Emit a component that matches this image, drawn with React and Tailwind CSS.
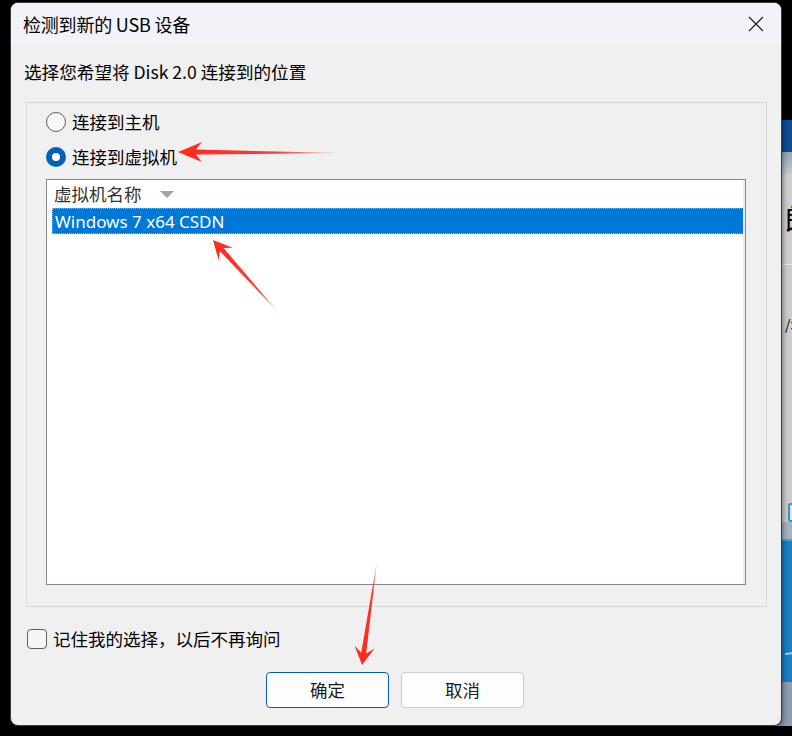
import React from "react";

const CJK = { fontFamily: '"Noto Sans CJK SC", "Noto Sans", sans-serif' };

function arrowPoints(tx, ty, px, py, lh, hw, sw) {
  const dx = px - tx;
  const dy = py - ty;
  const len = Math.hypot(dx, dy);
  const ux = dx / len;
  const uy = dy / len;
  const nx = -uy;
  const ny = ux;
  const ln = lh - 6;
  const bw = [px - ux * lh, py - uy * lh];
  const bn = [px - ux * ln, py - uy * ln];
  const pts = [
    [tx, ty],
    [bn[0] + nx * sw, bn[1] + ny * sw],
    [bw[0] + nx * hw, bw[1] + ny * hw],
    [px, py],
    [bw[0] - nx * hw, bw[1] - ny * hw],
    [bn[0] - nx * sw, bn[1] - ny * sw],
  ];
  return pts.map((p) => p[0].toFixed(1) + "," + p[1].toFixed(1)).join(" ");
}

function Arrows() {
  return (
    <svg className="absolute left-0 top-0 pointer-events-none" width="792" height="736" viewBox="0 0 792 736">
      <defs>
        <linearGradient id="g1" gradientUnits="userSpaceOnUse" x1="345" y1="153" x2="178" y2="152">
          <stop offset="0" stopColor="#ff2a1f" stopOpacity="0.1" />
          <stop offset="0.4" stopColor="#ff2a1f" stopOpacity="0.9" />
          <stop offset="1" stopColor="#ff2a1f" />
        </linearGradient>
        <linearGradient id="g2" gradientUnits="userSpaceOnUse" x1="279" y1="313" x2="213" y2="240">
          <stop offset="0" stopColor="#ff2a1f" stopOpacity="0.2" />
          <stop offset="0.3" stopColor="#ff2a1f" stopOpacity="0.9" />
          <stop offset="1" stopColor="#ff2a1f" />
        </linearGradient>
        <linearGradient id="g3" gradientUnits="userSpaceOnUse" x1="377" y1="561" x2="362" y2="665">
          <stop offset="0" stopColor="#ff2a1f" stopOpacity="0.3" />
          <stop offset="0.3" stopColor="#ff2a1f" stopOpacity="0.95" />
          <stop offset="1" stopColor="#ff2a1f" />
        </linearGradient>
      </defs>
      <polygon points={arrowPoints(345, 153, 178, 152, 24, 10, 2.5)} fill="url(#g1)" />
      <polygon points={arrowPoints(279, 313, 213, 240, 19, 9.5, 2.5)} fill="url(#g2)" />
      <polygon points={arrowPoints(377, 561, 362, 665, 18, 10, 2.5)} fill="url(#g3)" />
    </svg>
  );
}

function BackgroundWindow() {
  return (
    <div className="absolute left-[770px] top-[120px] w-[60px] h-[606px] flex flex-col bg-[#cbcbcb] border-l-[3px] border-[#7d7d7d]">
      <div className="h-[32px] bg-[#0c4d92]" />
      <div className="h-[22px] bg-gradient-to-b from-[#95a3b6] to-[#c4c9d0]" />
      <div className="h-[90px] bg-[#cfcfcf] relative overflow-hidden">
        <span className="absolute left-[12px] top-[30px] text-[28px] leading-none text-black" style={CJK}>朗</span>
      </div>
      <div className="h-[1px] bg-[#e6e6e6]" />
      <div className="h-[238px] bg-[#cdcdcd] relative">
        <span className="absolute left-[12px] top-[52px] text-[14px] leading-none text-black" style={CJK}>/址</span>
      </div>
      <div className="h-[19px] bg-[#cdcdcd] flex">
        <div className="ml-[15px] w-[30px] h-[19px] rounded-[3px] border-2 border-[#2a9bc0] bg-[#dfe9ee]" />
      </div>
      <div className="h-[17px] bg-[#a7b3c1]" />
      <div className="h-[2px] bg-[#3aa6e0]" />
      <div className="h-[141px] bg-[#1a7fc4] relative">
        <div className="absolute left-[12px] top-[110px] w-[40px] h-[2px] bg-[#9cd0f0] -rotate-6" />
      </div>
      <div className="flex-1 bg-[#8f9db0]" />
    </div>
  );
}

export default function App() {
  return (
    <div className="relative w-[792px] h-[736px] bg-black overflow-hidden" style={CJK}>
      <BackgroundWindow />
      <div className="absolute left-[10px] top-[2px] w-[772px] h-[724px] rounded-[8px] border border-[#3d3d3d] bg-[#f0f0f0] overflow-hidden flex flex-col shadow-[0_2px_6px_rgba(0,0,0,0.6)]">
        {/* title bar */}
        <div className="h-[41px] shrink-0 bg-[#f1f3f9] flex items-center pl-[12px] pr-[17px]">
          <span className="text-[18px] leading-none text-black tracking-[-0.2px]">检测到新的 USB 设备</span>
          <div className="flex-1" />
          <svg width="16" height="16" viewBox="0 0 16 16" className="mt-[1px]">
            <path d="M1 1 L15 15 M15 1 L1 15" stroke="#1a1a1a" strokeWidth="1.2" fill="none" />
          </svg>
        </div>
        {/* body */}
        <div className="flex flex-col flex-1">
          <div className="pt-[17px] pl-[13px] h-[58px] shrink-0">
            <span className="text-[17.6px] leading-[22px] text-black block">选择您希望将 Disk 2.0 连接到的位置</span>
          </div>
          <div className="ml-[15px] w-[741px] h-[505px] shrink-0 border border-[#d9d9d9] flex flex-col pl-[19px] pt-[7px]">
            <div className="h-[24px] flex items-center">
              <div className="w-[20px] h-[20px] rounded-full border border-[#5e5e5e] bg-[#f8f8f8]" />
              <span className="ml-[6px] text-[17.5px] leading-none text-black">连接到主机</span>
            </div>
            <div className="h-[24px] mt-[11px] flex items-center">
              <div className="w-[20px] h-[20px] rounded-full bg-[#005fb8] flex items-center justify-center">
                <div className="w-[8px] h-[8px] rounded-full bg-white" />
              </div>
              <span className="ml-[6px] text-[17.5px] leading-none text-black">连接到虚拟机</span>
            </div>
            <div className="mt-[10px] w-[700px] h-[406px] border border-[#828790] bg-white flex flex-col relative">
              <div className="h-[28px] flex items-center pl-[7px]">
                <span className="text-[17.5px] leading-none text-[#333333]">虚拟机名称</span>
                <svg width="16" height="8" viewBox="0 0 16 8" className="ml-[17px] mt-[1px]">
                  <polygon points="1,0 15,0 8,7" fill="#a3a3a3" />
                </svg>
              </div>
              <div className="ml-[5px] mr-[1px] h-[26px] bg-[#0078d7] border border-dotted border-[#f3a13a] flex items-center pl-[2px]">
                <span className="text-[17px] leading-none text-white" style={{ fontFamily: '"Noto Sans", "Open Sans", sans-serif' }}>
                  Windows 7 x64 CSDN
                </span>
              </div>
              <div className="absolute right-0 top-0 bottom-0 w-[2px] bg-[#ececec]" />
            </div>
          </div>
          <div className="mt-[20px] ml-[16px] h-[24px] flex items-center">
            <div className="w-[20px] h-[20px] rounded-[4px] border border-[#5f5f5f] bg-[#f5f5f5]" />
            <span className="ml-[6px] text-[17.5px] leading-none text-black">记住我的选择，以后不再询问</span>
          </div>
          <div className="mt-[21px] flex justify-center gap-[12px] pr-[2px]">
            <button className="w-[123px] h-[36px] rounded-[4px] border border-[#005fb8] bg-[#fdfdfd] text-[17.5px] text-[#1a1a1a] leading-none">
              确定
            </button>
            <button className="w-[123px] h-[36px] rounded-[4px] border border-[#cccccc] bg-[#fdfdfd] text-[17.5px] text-[#1a1a1a] leading-none">
              取消
            </button>
          </div>
        </div>
      </div>
      <Arrows />
    </div>
  );
}
